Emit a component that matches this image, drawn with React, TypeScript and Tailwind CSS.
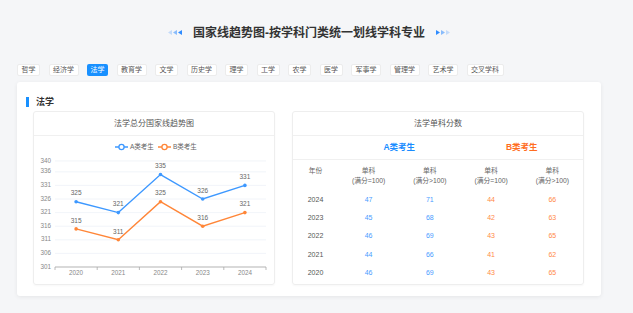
import React from 'react';

const TABS = ['哲学', '经济学', '法学', '教育学', '文学', '历史学', '理学', '工学', '农学', '医学', '军事学', '管理学', '艺术学', '交叉学科'];

const YEARS = ['2020', '2021', '2022', '2023', '2024'];
const SERIES_A = [325, 321, 335, 326, 331];
const SERIES_B = [315, 311, 325, 316, 321];
const TICKS = [340, 336, 331, 326, 321, 316, 311, 306, 301];

const ROWS = [
  { year: '2024', a1: 47, a2: 71, b1: 44, b2: 66 },
  { year: '2023', a1: 45, a2: 68, b1: 42, b2: 63 },
  { year: '2022', a1: 46, a2: 69, b1: 43, b2: 65 },
  { year: '2021', a1: 44, a2: 66, b1: 41, b2: 62 },
  { year: '2020', a1: 46, a2: 69, b1: 43, b2: 65 },
];

const BLUE = '#3d98ff';
const ORANGE = '#ff8638';

// chart coordinates (inside the card body)
const yPos = (v: number) => 131 - (v - 301) * 2.72;
const xPos = (i: number) => 42.1 + i * 42.2;

function Arrows({ dir }: { dir: 'left' | 'right' }) {
  const tri = (x: number, o: number) =>
    dir === 'left' ? (
      <polygon key={x} points={`${x + 4},0 ${x + 4},5 ${x},2.5`} fill="#2f8cff" opacity={o} />
    ) : (
      <polygon key={x} points={`${x},0 ${x},5 ${x + 4},2.5`} fill="#2f8cff" opacity={o} />
    );
  const ops = dir === 'left' ? [0.25, 0.55, 1] : [1, 0.55, 0.25];
  return (
    <svg width="14" height="5" viewBox="0 0 14 5">
      {ops.map((o, i) => tri(i * 5, o))}
    </svg>
  );
}

function TrendChart() {
  const lineA = SERIES_A.map((v, i) => `${xPos(i)},${yPos(v)}`).join(' ');
  const lineB = SERIES_B.map((v, i) => `${xPos(i)},${yPos(v)}`).join(' ');
  return (
    <svg width="240" height="147" viewBox="0 0 240 147" style={{ fontFamily: '"Liberation Sans", "Noto Sans CJK SC", sans-serif' }}>
      {/* legend */}
      <line x1="81" y1="11" x2="94" y2="11" stroke={BLUE} strokeWidth="1.5" />
      <circle cx="87.5" cy="11" r="2.6" fill="#fff" stroke={BLUE} strokeWidth="1.3" />
      <text x="96" y="11" fontSize="6.5" fill="#666" dominantBaseline="middle">A类考生</text>
      <line x1="124" y1="11" x2="137" y2="11" stroke={ORANGE} strokeWidth="1.5" />
      <circle cx="130.5" cy="11" r="2.6" fill="#fff" stroke={ORANGE} strokeWidth="1.3" />
      <text x="139" y="11" fontSize="6.5" fill="#666" dominantBaseline="middle">B类考生</text>

      {/* grid + y labels */}
      {TICKS.map((t) => (
        <g key={t}>
          {t !== 301 && <line x1="21" y1={yPos(t)} x2="232" y2={yPos(t)} stroke="#edf1f7" strokeWidth="0.8" />}
          <text x="17" y={yPos(t)} fontSize="6.3" fill="#888" textAnchor="end" dominantBaseline="middle">{t}</text>
        </g>
      ))}

      {/* x axis */}
      <line x1="21" y1="131" x2="232" y2="131" stroke="#aaa" strokeWidth="0.9" />
      {[0, 1, 2, 3, 4, 5].map((i) => (
        <line key={i} x1={21 + i * 42.2} y1="131" x2={21 + i * 42.2} y2="134" stroke="#aaa" strokeWidth="0.8" />
      ))}
      {YEARS.map((y, i) => (
        <text key={y} x={xPos(i)} y="137" fontSize="6.3" fill="#888" textAnchor="middle" dominantBaseline="middle">{y}</text>
      ))}

      {/* series */}
      <polyline points={lineA} fill="none" stroke={BLUE} strokeWidth="1.4" />
      <polyline points={lineB} fill="none" stroke={ORANGE} strokeWidth="1.4" />
      {SERIES_A.map((v, i) => (
        <g key={`a${i}`}>
          <circle cx={xPos(i)} cy={yPos(v)} r="1.8" fill={BLUE} />
          <text x={xPos(i)} y={yPos(v) - 8} fontSize="6.5" fill="#666" textAnchor="middle" dominantBaseline="middle">{v}</text>
        </g>
      ))}
      {SERIES_B.map((v, i) => (
        <g key={`b${i}`}>
          <circle cx={xPos(i)} cy={yPos(v)} r="1.8" fill={ORANGE} />
          <text x={xPos(i)} y={yPos(v) - 8} fontSize="6.5" fill="#666" textAnchor="middle" dominantBaseline="middle">{v}</text>
        </g>
      ))}
    </svg>
  );
}

export default function App() {
  return (
    <div className="w-[633px] h-[313px] bg-[#f5f6f8] overflow-hidden font-['Liberation_Sans','Noto_Sans_CJK_SC',sans-serif]">
      <div className="w-[618px]">
        {/* Titre */}
        <div className="h-[64px] flex items-center justify-center gap-[11px] pt-[1px]">
          <Arrows dir="left" />
          <h1 className="text-[12px] leading-[16px] font-bold text-[#333]">国家线趋势图-按学科门类统一划线学科专业</h1>
          <Arrows dir="right" />
        </div>

        {/* Onglets */}
        <div className="flex gap-[8.5px] px-[17px] h-[12px]">
          {TABS.map((t) => (
            <div
              key={t}
              className={
                t === '法学'
                  ? 'h-[12px] px-[3.5px] rounded-[2px] bg-[#1890ff] text-white text-[7px] leading-[12px]'
                  : 'h-[12px] px-[3.5px] rounded-[2px] bg-white border border-[#ececec] text-[#555] text-[7px] leading-[10px]'
              }
            >
              {t}
            </div>
          ))}
        </div>

        {/* Carte principale */}
        <div className="mt-[6px] mx-[17px] w-[584px] h-[214px] bg-white rounded-[3px] shadow-[0_1px_4px_rgba(0,0,0,0.07)]">
          <div className="flex items-center gap-[7px] pl-[9px] pt-[10px] h-[29px]">
            <div className="w-[3px] h-[10px] bg-[#1890ff]" />
            <span className="text-[9px] font-bold text-[#333] leading-[10px]">法学</span>
          </div>

          <div className="flex gap-[17px] pl-[16px]">
            {/* Courbe */}
            <div className="w-[242px] h-[174px] border border-[#eeeeee] rounded-[3px] shadow-[0_1px_2px_rgba(0,0,0,0.03)]">
              <div className="h-[24px] border-b border-[#f0f0f0] flex items-center justify-center text-[8px] text-[#555]">
                法学总分国家线趋势图
              </div>
              <TrendChart />
            </div>

            {/* Tableau */}
            <div className="w-[292px] h-[174px] border border-[#eeeeee] rounded-[3px] shadow-[0_1px_2px_rgba(0,0,0,0.03)]">
              <div className="h-[24px] border-b border-[#f0f0f0] flex items-center justify-center text-[8px] text-[#555]">
                法学单科分数
              </div>
              <div className="h-[24px] border-b border-[#f0f0f0] grid grid-cols-[45px_1fr_1fr] items-center text-[8.5px] font-bold">
                <div />
                <div className="text-center text-[#1a8cff]">A类考生</div>
                <div className="text-center text-[#ff6d1f]">B类考生</div>
              </div>
              <div className="h-[31px] grid grid-cols-[45px_1fr_1fr_1fr_1fr] items-center text-[6.8px] leading-[10px] text-[#666] text-center">
                <div className="self-start pt-[6px]">年份</div>
                <div>单科<br />(满分=100)</div>
                <div>单科<br />(满分&gt;100)</div>
                <div>单科<br />(满分=100)</div>
                <div>单科<br />(满分&gt;100)</div>
              </div>
              {ROWS.map((r) => (
                <div key={r.year} className="h-[18.3px] grid grid-cols-[45px_1fr_1fr_1fr_1fr] items-center text-[7px] text-center">
                  <div className="text-[#555]">{r.year}</div>
                  <div className="text-[#4a9dff]">{r.a1}</div>
                  <div className="text-[#4a9dff]">{r.a2}</div>
                  <div className="text-[#ff8a48]">{r.b1}</div>
                  <div className="text-[#ff8a48]">{r.b2}</div>
                </div>
              ))}
            </div>
          </div>
        </div>
      </div>
    </div>
  );
}
